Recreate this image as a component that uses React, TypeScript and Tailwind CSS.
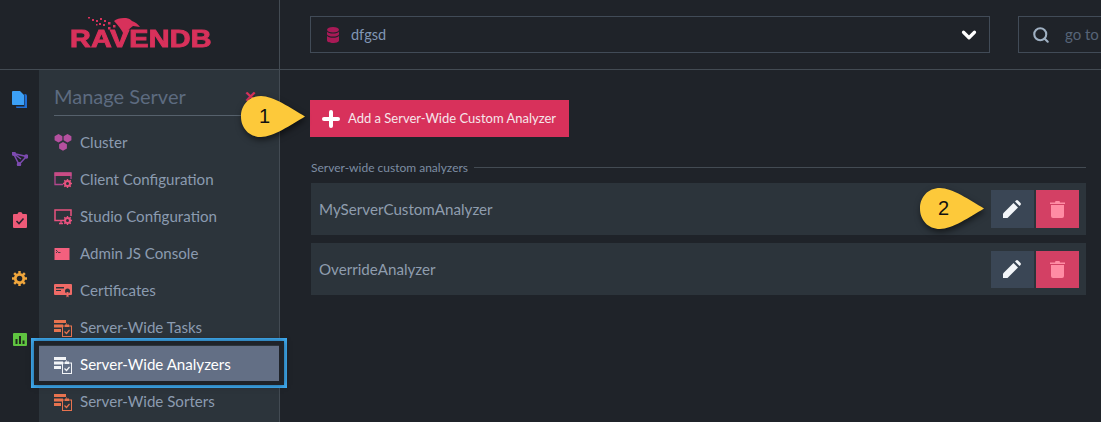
import { ChevronDown, Plus, Search } from "lucide-react";
import type { ReactNode } from "react";

function DocsIcon() {
  return (
    <svg width="16" height="18" viewBox="0 0 16 18">
      <path d="M4 3h9a2 2 0 0 1 2 2v12H5a1 1 0 0 1-1-1z" fill="#1f6fd6" />
      <path d="M2.500 1.500h8a2 2 0 0 1 2 2v12h-9a1 1 0 0 1-1-1z" fill="#1f2329" />
      <path d="M0 1a1 1 0 0 1 1-1h7l4 4v10H1a1 1 0 0 1-1-1z" fill="#3ca0f5" />
    </svg>
  );
}

function GraphIcon() {
  return (
    <svg width="16" height="14" viewBox="0 0 16 14" fill="none" stroke="#7d4bb0" strokeWidth="1.500">
      <path d="M1.500 1.500L14.500 4.500 7 12.500zM1.500 1.500L9 7" />
      <circle cx="1.700" cy="1.700" r="1.500" fill="#7d4bb0" />
      <circle cx="14.300" cy="4.500" r="1.400" fill="#7d4bb0" />
      <circle cx="7" cy="12.300" r="1.500" fill="#7d4bb0" />
    </svg>
  );
}

function ClipboardIcon() {
  return (
    <svg width="14" height="16" viewBox="0 0 14 16">
      <path d="M1 2h3.500a2.500 2 0 0 1 5 0H13a1 1 0 0 1 1 1v12a1 1 0 0 1-1 1H1a1 1 0 0 1-1-1V3a1 1 0 0 1 1-1z" fill="#ee5a78" />
      <path d="M3.500 9l2.500 2.500 4.500-5" fill="none" stroke="#2a2330" strokeWidth="1.600" />
    </svg>
  );
}

function GearIcon({ size = 15, color = "#f0a63c" }: { size?: number; color?: string }) {
  return (
    <svg width={size} height={size} viewBox="0 0 16 16" fill="none">
      <circle cx="8" cy="8" r="4.500" stroke={color} strokeWidth="3" />
      <path d="M8 0v3M8 13v3M0 8h3M13 8h3M2.300 2.300l2.200 2.200M11.500 11.500l2.200 2.200M13.700 2.300l-2.200 2.200M4.500 11.500l-2.200 2.200" stroke={color} strokeWidth="2.600" />
    </svg>
  );
}

function StatsIcon() {
  return (
    <svg width="14" height="13" viewBox="0 0 14 13">
      <rect width="14" height="13" rx="1" fill="#5fc440" />
      <path d="M2.500 6h2v5h-2zM6 3h2v8H6zM9.500 7.500h2V11h-2z" fill="#1f2a1c" />
    </svg>
  );
}

function ClusterIcon() {
  return (
    <svg width="18" height="17" viewBox="0 0 18 17" fill="#b4509f">
      <path d="M4.500 0L8.400 2.200v4L4.500 8.400 0.600 6.200v-4zM13.500 0l3.900 2.200v4l-3.900 2.200-3.900-2.200v-4zM9 8l3.900 2.200v4.300L9 16.700l-3.900-2.200v-4.300z" />
    </svg>
  );
}

function GearGlyph() {
  return (
    <g>
      <circle cx="4.500" cy="4.500" r="2.500" stroke="#e8527f" strokeWidth="2" />
      <path d="M4.500 0v2M4.500 7v2M0 4.500h2M7 4.500h2M1.300 1.300l1.400 1.400M6.300 6.300l1.400 1.400M7.700 1.300L6.300 2.700M2.700 6.300L1.300 7.700" stroke="#e8527f" strokeWidth="1.400" />
    </g>
  );
}

function ClientConfigIcon() {
  return (
    <svg width="18" height="16" viewBox="0 0 18 16" fill="none">
      <path d="M9 12.500H1V1h16v6" stroke="#b4478e" strokeWidth="1.300" />
      <rect x="0.500" y="0.500" width="17" height="3.500" fill="#c84c84" />
      <g transform="translate(9 7)"><GearGlyph /></g>
    </svg>
  );
}

function StudioConfigIcon() {
  return (
    <svg width="18" height="16" viewBox="0 0 18 16" fill="none">
      <path d="M9 11.500H1V1h16v6" stroke="#e8527f" strokeWidth="1.500" />
      <path d="M5 14.500h4M7 11.500v3" stroke="#e8527f" strokeWidth="1.300" />
      <g transform="translate(9 7)"><GearGlyph /></g>
    </svg>
  );
}

function ConsoleIcon() {
  return (
    <svg width="16" height="12" viewBox="0 0 16 12">
      <rect width="15" height="12" x="0.500" fill="#f4607e" />
      <path d="M2 2l1.500 1.500L2 5" fill="none" stroke="#2c343b" strokeWidth="0.900" />
      <path d="M4 4.500h2.500" stroke="#2c343b" strokeWidth="0.800" />
    </svg>
  );
}

function CertificateIcon() {
  return (
    <svg width="18" height="14" viewBox="0 0 18 14">
      <rect width="18" height="11" rx="1" fill="#ef6a66" />
      <path d="M2 3h8v1.500H2zM2 6h5v1H2z" fill="#2c343b" />
      <circle cx="13.500" cy="7" r="2.500" fill="#2c343b" />
      <path d="M12.500 8h2v5.500l-1-1-1 1z" fill="#ef6a66" />
    </svg>
  );
}

function TasksIcon({ color, dark }: { color: string; dark: string }) {
  return (
    <svg width="18" height="18" viewBox="0 0 18 18" fill="none">
      <path d="M0 1h12v3H0zM0 5.500h9v3H0zM0 10h7v3H0z" fill={color} />
      <path d="M12 5h1M10 9h1" stroke={color} />
      <rect x="8.500" y="7" width="9" height="10.500" fill={dark} stroke={color} />
      <rect x="11" y="5.500" width="4" height="2.500" fill={color} />
      <path d="M10.500 12.500l2 2 3-3.500" stroke={color} strokeWidth="1.200" />
    </svg>
  );
}

function DatabaseIcon() {
  return (
    <svg width="12" height="16" viewBox="0 0 12 16" fill="#a81a56">
      <ellipse cx="6" cy="2.800" rx="6" ry="2.800" />
      <path d="M0 4.500c1 1.500 3 2 6 2s5-.5 6-2v3c-1 1.500-3 2-6 2s-5-.5-6-2zM0 8.800c1 1.500 3 2 6 2s5-.5 6-2v4.400C12 15 9 16 6 16s-6-1-6-2.800z" />
    </svg>
  );
}

function PencilIcon() {
  return (
    <svg width="19" height="18" viewBox="0 0 19 18">
      <path d="M0 18v-4.500L10.500 3l4.500 4.500L4.500 18z" fill="#f2f5f8" />
      <path d="M12 1.500l1-1a1.500 1.500 0 0 1 2 0l2.500 2.500a1.500 1.500 0 0 1 0 2l-1 1z" fill="#f2f5f8" />
    </svg>
  );
}

function TrashIcon() {
  return (
    <svg width="15" height="17" viewBox="0 0 15 17" fill="#ff8ca4">
      <path d="M0 1.500h5L5.500 0h4l.5 1.500h5V3H0zM1 4h13v11a2 2 0 0 1-2 2H3a2 2 0 0 1-2-2z" />
    </svg>
  );
}

function Logo() {
  return (
    <div className="relative h-[34px] w-[140px]">
      {/* bird and its scattered feathers, above the wordmark */}
      <svg className="absolute left-[18px] top-[3px]" width="54" height="20" viewBox="0 0 54 20" fill="#d8315b">
        <path d="M26 4c2-2 6-3 10-3 3 0 5 0 8 3 3 1 6 3 8 6l-7-1c-3 2-6 5-9 9-2-5-6-10-10-14z" />
        <path d="M0 0h2v1.500H0zM4 2h2v2H4zM8 3h2v2H8zM12 1h2v2h-2zM16 3h2v2h-2zM11 6h2v2h-2zM15 7h2v2h-2zM20 5h2.500v2.500H20zM20 10h2.500v2.500H20zM25 8h2.500v2.500H25zM8 7h1.500v1.500H8z" />
      </svg>
      <span className="absolute bottom-0 left-0 origin-left scale-x-[1.25] text-[23px] font-bold leading-[18px] tracking-[0.2px] text-[#d8315b] [-webkit-text-stroke:0.9px_#d8315b] [font-family:'Liberation_Sans',sans-serif]">
        RAVENDB
      </span>
    </div>
  );
}

function NavItem({ icon, label, active }: { icon: ReactNode; label: string; active?: boolean }) {
  return (
    <div className={`flex h-[37px] items-center pl-[15px] ${active ? "bg-[#636f85] text-white" : "text-[#8b9bb0]"}`}>
      <div className="flex w-[26px] justify-start">{icon}</div>
      <span className="text-[15.1px]">{label}</span>
    </div>
  );
}

function AnalyzerRow({ name, buttonClass }: { name: string; buttonClass: string }) {
  return (
    <div className="flex h-[52px] items-center justify-between bg-[#2c343b] pl-2 pr-[7px]">
      <span className="text-[15.15px] text-[#8f9dae]">{name}</span>
      <div className="flex gap-[2px]">
        <button className={`flex w-[43px] items-center justify-center bg-[#3a4655] ${buttonClass}`}>
          <PencilIcon />
        </button>
        <button className={`flex w-[43px] items-center justify-center bg-[#d34064] ${buttonClass}`}>
          <TrashIcon />
        </button>
      </div>
    </div>
  );
}

function Callout({ label, className }: { label: string; className: string }) {
  return (
    <div className={`absolute h-[41px] w-[64px] ${className}`}>
      <svg className="absolute inset-0 drop-shadow-[1px_3px_3px_rgba(0,0,0,0.55)]" width="64" height="41" viewBox="0 0 64 41">
        <path d="M20 0C32 0 50 12 64 20.500 50 29 32 41 20 41 8 41 0 32 0 20.500S8 0 20 0z" fill="#fdc93a" />
      </svg>
      <span className="absolute left-[18px] top-[8px] text-[20px] leading-[24px] text-[#111] [font-family:'Liberation_Sans',sans-serif]">
        {label}
      </span>
    </div>
  );
}

export default function App() {
  return (
    <div className="relative h-[422px] w-[1101px] overflow-hidden bg-[#1f2329] [font-family:Lato,sans-serif]">
      <header className="flex h-[70px] border-b border-[#434b53]">
        <div className="flex w-[280px] shrink-0 items-start justify-center border-r border-[#434b53] pt-[14px]">
          <Logo />
        </div>
        <div className="flex flex-1 items-start gap-7 pl-[30px] pt-4">
          <div className="flex h-[37px] w-[680px] shrink-0 items-center border border-[#414b57] pl-[16px] pr-[9px]">
            <DatabaseIcon />
            <span className="ml-[12px] text-[14.5px] text-[#8197b5]">dfgsd</span>
            <ChevronDown className="ml-auto text-white" size={22} strokeWidth={3.500} />
          </div>
          <div className="flex h-[37px] flex-1 items-center overflow-hidden border border-r-0 border-[#414b57] pl-[13px]">
            <Search className="text-[#9fb0c2]" size={18} strokeWidth={2.800} />
            <span className="ml-[15px] whitespace-nowrap text-[15px] text-[#566477]">go to database</span>
          </div>
        </div>
      </header>

      <div className="flex h-[352px]">
        <aside className="flex w-[39px] shrink-0 flex-col items-center pt-[21px]">
          <div className="flex h-[61px] items-start"><DocsIcon /></div>
          <div className="flex h-[60px] items-start"><GraphIcon /></div>
          <div className="flex h-[59px] items-start"><ClipboardIcon /></div>
          <div className="flex h-[62px] items-start"><GearIcon /></div>
          <div className="flex h-[59px] items-start"><StatsIcon /></div>
        </aside>

        <nav className="w-[241px] shrink-0 border-r border-[#434b53] bg-[#2c343b]">
          <div className="mx-[15px] h-[46px] border-b border-[#56616c] pt-[13px]">
            <span className="text-[20px] leading-[26px] text-[#5d6b80]">Manage Server</span>
          </div>
          <div className="pt-[8px]">
            <NavItem icon={<ClusterIcon />} label="Cluster" />
            <NavItem icon={<ClientConfigIcon />} label="Client Configuration" />
            <NavItem icon={<StudioConfigIcon />} label="Studio Configuration" />
            <NavItem icon={<ConsoleIcon />} label="Admin JS Console" />
            <NavItem icon={<CertificateIcon />} label="Certificates" />
            <NavItem icon={<TasksIcon color="#e8734f" dark="#2c343b" />} label="Server-Wide Tasks" />
            <NavItem icon={<TasksIcon color="#f2f4f7" dark="#636f85" />} label="Server-Wide Analyzers" active />
            <NavItem icon={<TasksIcon color="#e8734f" dark="#2c343b" />} label="Server-Wide Sorters" />
          </div>
        </nav>

        <main className="flex-1 pl-[31px] pr-[15px] pt-[30px]">
          <button className="-ml-px flex h-[37px] w-[259px] items-center bg-[#d8315b] pl-[9px] text-[13px] text-[#f6e6ea]">
            <Plus className="mr-[5px] text-white" size={24} strokeWidth={4} />
            Add a Server-Wide Custom Analyzer
          </button>
          <div className="mt-[23px] flex h-[16px] items-center gap-[6px] pb-[1px]">
            <span className="text-[12px] text-[#7d8da3]">Server-wide custom analyzers</span>
            <div className="h-px flex-1 bg-[#434b53]" />
          </div>
          <div className="mt-[7px] flex flex-col gap-2">
            <AnalyzerRow name="MyServerCustomAnalyzer" buttonClass="h-[38px]" />
            <AnalyzerRow name="OverrideAnalyzer" buttonClass="h-[37px]" />
          </div>
        </main>
      </div>

      {/* close icon partly hidden by callout 1 */}
      <span className="absolute left-[244px] top-[90px] h-[12px] w-[14px] text-[15px] font-bold leading-[12px] text-[#d8315b]">✕</span>
      <Callout label="1" className="left-[241px] top-[96px]" />
      <Callout label="2" className="left-[920px] top-[188px]" />

      {/* annotation frame round the selected menu item */}
      <div className="pointer-events-none absolute left-[31px] top-[338px] h-[50px] w-[256px] border-[3px] border-[#40aef5]">
        <div className="h-full w-full border-x-[5px] border-y-[4px] border-[#1f2329] shadow-[0_0_6px_rgba(0,0,0,0.5)]" />
      </div>
    </div>
  );
}
